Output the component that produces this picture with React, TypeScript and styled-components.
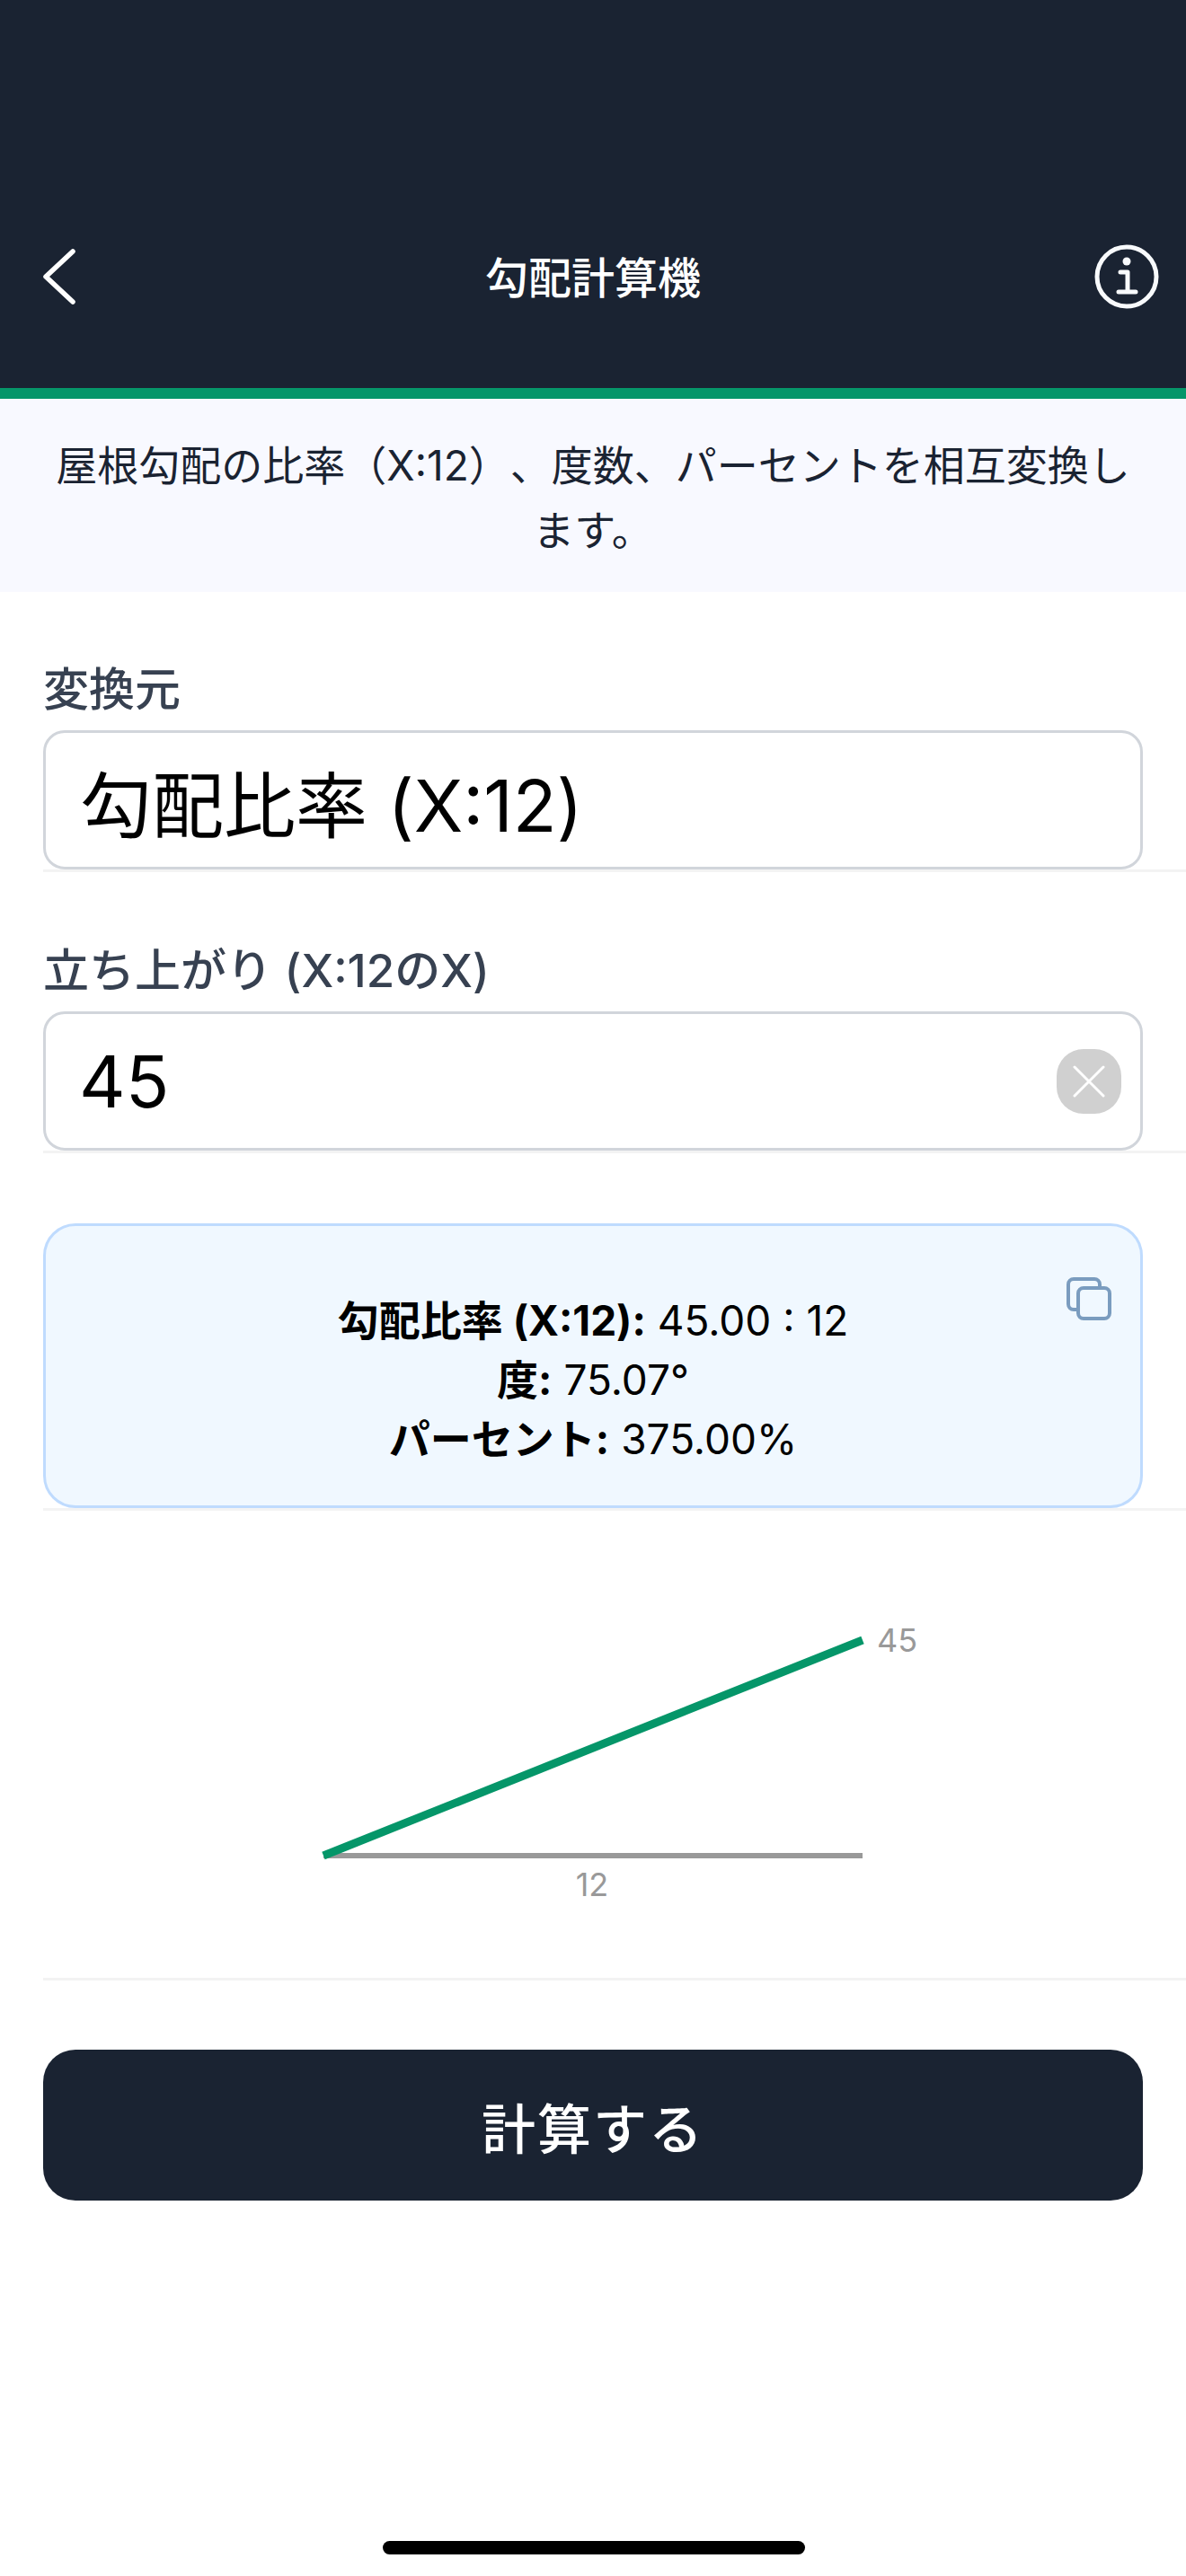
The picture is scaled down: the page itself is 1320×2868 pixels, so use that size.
import React from "react";
import styled, { createGlobalStyle } from "styled-components";

const Colors = {
  navy: "#1a2332",
  green: "#059669",
  label: "#374151",
  border: "#d1d5db",
  rule: "#f3f3f3",
  muted: "#999999",
};

const GlobalStyle = createGlobalStyle`
  html, body {
    margin: 0;
    padding: 0;
    background: #ffffff;
  }
  body {
    font-family: Inter, "Noto Sans CJK JP", sans-serif;
    text-spacing-trim: space-all;
  }
  * {
    box-sizing: border-box;
  }
`;

const Root = styled.div`
  width: 1320px;
  height: 2868px;
  position: relative;
  overflow: hidden;
  background: #ffffff;
`;

const Header = styled.header`
  height: 444px;
  padding: 272px 30px 0 48px;
  background: ${Colors.navy};
  border-bottom: 12px solid ${Colors.green};
  display: flex;
  justify-content: space-between;
  align-items: flex-start;
`;

const HeaderTitle = styled.h1`
  margin: 0 18px 0 0;
  padding-top: 8px;
  font-size: 48px;
  line-height: 60px;
  font-weight: 500;
  color: #ffffff;
`;

const IconButton = styled.div`
  width: 72px;
  height: 72px;
  display: flex;
  align-items: center;
  justify-content: center;
`;

const BackButton = styled(IconButton)`
  justify-content: flex-start;
`;

const Intro = styled.p`
  margin: 0;
  height: 215px;
  padding: 38px 60px 0;
  background: #f8f9ff;
  color: ${Colors.navy};
  font-size: 46px;
  line-height: 72px;
  text-align: center;
`;

const Field = styled.section`
  margin-left: 48px;
  padding-right: 48px;
  border-bottom: 3px solid ${Colors.rule};
`;

const SourceField = styled(Field)`
  padding-top: 79px;
`;

const ValueField = styled(Field)`
  padding-top: 80px;
`;

const Label = styled.label`
  display: block;
  margin-bottom: 15px;
  color: ${Colors.label};
  font-size: 51px;
  line-height: 60px;
  font-weight: 500;
`;

const InputShell = styled.div<{ $indent: number }>`
  height: 155px;
  padding: 0 21px 0 ${(p) => p.$indent}px;
  border: 3px solid ${Colors.border};
  border-radius: 24px;
  background: #ffffff;
  display: flex;
  align-items: center;
  justify-content: space-between;
  color: #000000;
  font-size: 80px;
`;

const ClearButton = styled.div`
  width: 72px;
  height: 72px;
  border-radius: 30px;
  background: #d0d0d0;
  display: flex;
  align-items: center;
  justify-content: center;
`;

const ResultField = styled(Field)`
  padding-top: 78px;
`;

const ResultCard = styled.div`
  position: relative;
  height: 317px;
  padding-top: 72px;
  border: 3px solid #bfdbfe;
  border-radius: 36px;
  background: #f0f8ff;
  text-align: center;
  color: #000000;
  font-size: 46px;
  line-height: 66px;
`;

const ResultLine = styled.div``;

const ResultKey = styled.strong`
  font-weight: 700;
`;

const CopyButton = styled.div`
  position: absolute;
  top: 55px;
  right: 32px;
  width: 50px;
  height: 48px;
`;

const DiagramField = styled(Field)`
  height: 523px;
`;

const DiagramSvg = styled.svg`
  display: block;
`;

const DiagramLabel = styled.text`
  fill: ${Colors.muted};
  font-family: Inter, "Noto Sans CJK JP", sans-serif;
  font-size: 36px;
`;

const Actions = styled.div`
  padding: 77px 48px 0;
`;

const CalcButton = styled.button`
  display: block;
  width: 100%;
  height: 168px;
  border: 0;
  border-radius: 36px;
  background: ${Colors.navy};
  color: #ffffff;
  font-family: Inter, "Noto Sans CJK JP", sans-serif;
  font-size: 60px;
  font-weight: 500;
  letter-spacing: 2px;
`;

const HomeIndicator = styled.div`
  position: absolute;
  left: 426px;
  bottom: 24px;
  width: 470px;
  height: 15px;
  border-radius: 8px;
  background: #000000;
`;

export default function App() {
  return (
    <Root>
      <GlobalStyle />
      <Header>
        <BackButton>
          <svg width="36" height="62" viewBox="0 0 36 62" fill="none">
            <path
              d="M33 3 L3 31 L33 59"
              stroke="#ffffff"
              strokeWidth="5.5"
              strokeLinecap="round"
              strokeLinejoin="round"
            />
          </svg>
        </BackButton>
        <HeaderTitle>勾配計算機</HeaderTitle>
        <IconButton>
          <svg width="72" height="72" viewBox="0 0 72 72" fill="none">
            <circle cx="36" cy="36" r="33" stroke="#f8fafc" strokeWidth="5" />
            <circle cx="36" cy="19" r="4.5" fill="#f8fafc" />
            <path
              d="M29 31 H37 V53 M27 53 H46"
              stroke="#f8fafc"
              strokeWidth="5"
              strokeLinecap="round"
              strokeLinejoin="round"
            />
          </svg>
        </IconButton>
      </Header>

      <Intro>屋根勾配の比率（X:12）、度数、パーセントを相互変換します。</Intro>

      <SourceField>
        <Label>変換元</Label>
        <InputShell $indent={38}>勾配比率 (X:12)</InputShell>
      </SourceField>

      <ValueField>
        <Label>立ち上がり (X:12のX)</Label>
        <InputShell $indent={37}>
          45
          <ClearButton>
            <svg width="36" height="36" viewBox="0 0 36 36" fill="none">
              <path
                d="M2 2 L34 34 M34 2 L2 34"
                stroke="#ffffff"
                strokeWidth="3"
                strokeLinecap="round"
              />
            </svg>
          </ClearButton>
        </InputShell>
      </ValueField>

      <ResultField>
        <ResultCard>
          <CopyButton>
            <svg width="50" height="48" viewBox="0 0 50 48" fill="none">
              <rect x="13" y="12" width="35" height="34" rx="6" stroke="#7a9cbf" strokeWidth="4" />
              <path
                d="M37 12 V8 A6 6 0 0 0 31 2 H8 A6 6 0 0 0 2 8 V30 A6 6 0 0 0 8 36 H13"
                stroke="#7a9cbf"
                strokeWidth="4"
              />
            </svg>
          </CopyButton>
          <ResultLine>
            <ResultKey>勾配比率 (X:12):</ResultKey> 45.00 : 12
          </ResultLine>
          <ResultLine>
            <ResultKey>度:</ResultKey> 75.07°
          </ResultLine>
          <ResultLine>
            <ResultKey>パーセント:</ResultKey> 375.00%
          </ResultLine>
        </ResultCard>
      </ResultField>

      <DiagramField>
        <DiagramSvg width="1224" height="520" viewBox="0 0 1224 520">
          <line x1="312" y1="384" x2="912" y2="384" stroke={Colors.muted} strokeWidth="6" />
          <line x1="312" y1="384" x2="912" y2="144" stroke={Colors.green} strokeWidth="9" />
          <DiagramLabel x="928" y="157">45</DiagramLabel>
          <DiagramLabel x="611" y="429" textAnchor="middle">12</DiagramLabel>
        </DiagramSvg>
      </DiagramField>

      <Actions>
        <CalcButton>計算する</CalcButton>
      </Actions>

      <HomeIndicator />
    </Root>
  );
}
